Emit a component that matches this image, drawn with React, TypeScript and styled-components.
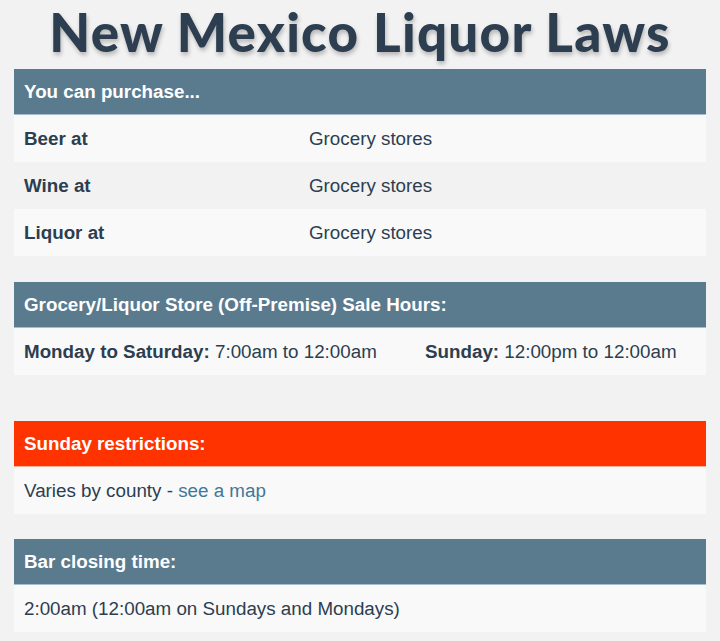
import React from 'react';
import styled, { createGlobalStyle } from 'styled-components';

// Dados das tabelas
const purchase = [
  { label: 'Beer at', value: 'Grocery stores' },
  { label: 'Wine at', value: 'Grocery stores' },
  { label: 'Liquor at', value: 'Grocery stores' }
];

const GlobalStyle = createGlobalStyle`
  html, body {
    margin: 0;
    padding: 0;
    background: #f2f2f2;
  }
  body {
    font-family: 'Liberation Sans', Arial, sans-serif;
    color: #2c3e50;
  }
`;

const Page = styled.div`
  padding: 0 14px 10px;
  overflow: hidden;
`;

const Title = styled.h1`
  margin: 0;
  padding-bottom: 5px;
  font-family: Lato, 'Open Sans', sans-serif;
  font-weight: 900;
  font-size: 53px;
  line-height: 64px;
  letter-spacing: 1.2px;
  text-align: center;
  color: #2c3e50;
  text-shadow: 1px 3px 4px rgba(0, 0, 0, 0.25);
  white-space: nowrap;
`;

const Panel = styled.section<{ $gap?: number }>`
  margin-bottom: ${p => p.$gap ?? 26}px;
`;

const PanelHeader = styled.div<{ $alert?: boolean }>`
  height: 45px;
  display: flex;
  align-items: center;
  padding: 0 10px;
  background: ${p => (p.$alert ? '#ff3300' : '#5a7a8e')};
  border-bottom: 1px solid ${p => (p.$alert ? '#ffb29a' : '#a9bccb')};
  color: #fff;
  font-weight: bold;
  font-size: 18.8px;
`;

const Row = styled.div<{ $cols?: string }>`
  display: grid;
  grid-template-columns: ${p => p.$cols ?? '1fr'};
  align-items: center;
  height: 47px;
  padding: 0 10px;
  background: #f9f9f9;
  font-size: 18.8px;

  &:nth-child(even) {
    background: #f2f2f2;
  }
`;

const Label = styled.span`
  font-weight: bold;
`;

const Link = styled.a`
  color: #41789a;
  text-decoration: none;
`;

const App: React.FC = () => (
  <Page>
    <GlobalStyle />
    <Title>New Mexico Liquor Laws</Title>

    <Panel>
      <PanelHeader>You can purchase...</PanelHeader>
      <div>
        {purchase.map(p => (
          <Row key={p.label} $cols="285px 1fr">
            <Label>{p.label}</Label>
            <span>{p.value}</span>
          </Row>
        ))}
      </div>
    </Panel>

    <Panel $gap={46}>
      <PanelHeader>Grocery/Liquor Store (Off-Premise) Sale Hours:</PanelHeader>
      <div>
        <Row $cols="401px 1fr">
          <span><Label>Monday to Saturday:</Label> 7:00am to 12:00am</span>
          <span><Label>Sunday:</Label> 12:00pm to 12:00am</span>
        </Row>
      </div>
    </Panel>

    <Panel $gap={25}>
      <PanelHeader $alert>Sunday restrictions:</PanelHeader>
      <div>
        <Row>
          <span>Varies by county - <Link href="#">see a map</Link></span>
        </Row>
      </div>
    </Panel>

    <Panel>
      <PanelHeader>Bar closing time:</PanelHeader>
      <div>
        <Row>
          <span>2:00am (12:00am on Sundays and Mondays)</span>
        </Row>
      </div>
    </Panel>
  </Page>
);

export default App;
